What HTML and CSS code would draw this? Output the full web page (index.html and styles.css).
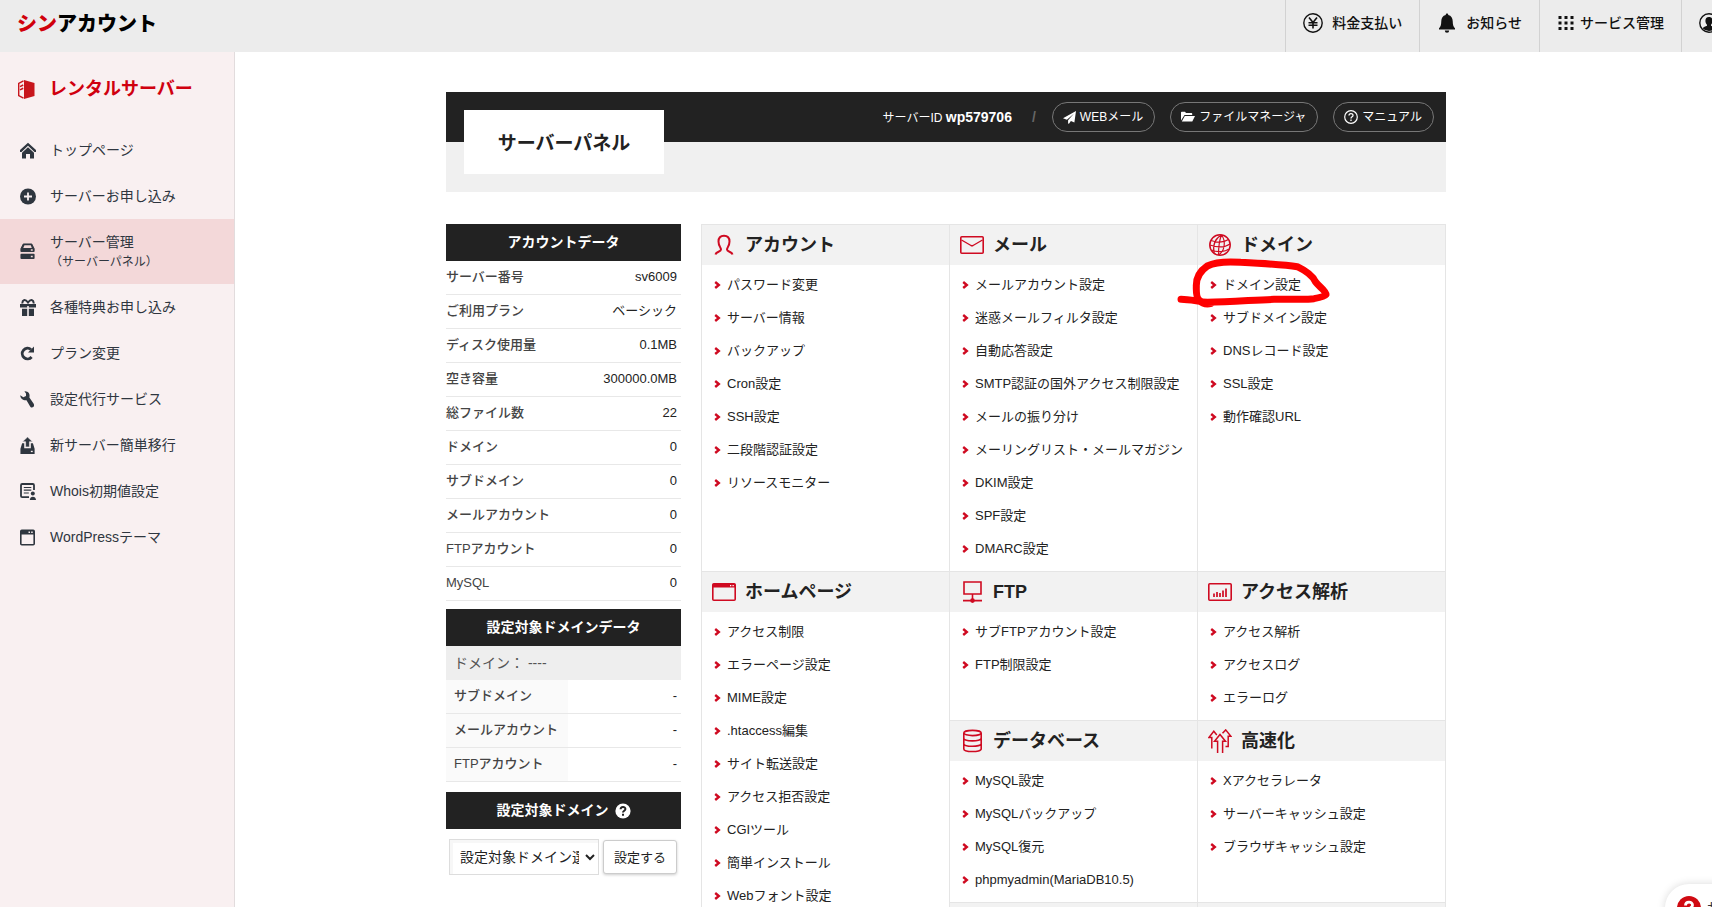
FILE: index.html
```
<!DOCTYPE html>
<html lang="ja">
<head>
<meta charset="utf-8">
<title>サーバーパネル</title>
<meta name="viewport" content="width=device-width, initial-scale=1">
<link rel="stylesheet" href="styles.css">
</head>
<body>
<svg class="defs" aria-hidden="true">
  <symbol id="chev" viewBox="0 0 7 8"><path d="M1.2 1 L4.8 4 L1.2 7" fill="none" stroke="#cf0a21" stroke-width="2.4"/></symbol>
</svg>
<header class="topbar">
  <a class="logo" href="#"><span class="logo-red">シン</span>アカウント</a>
  <nav class="topnav">
    <a href="#" class="topnav-item">
      <svg class="icon20" viewBox="0 0 20 20"><circle cx="10" cy="10" r="9.2" fill="none" stroke="#111" stroke-width="1.4"/><path d="M6 4.5 L10 9.5 L14 4.5 M10 9.5 V15.5 M5.5 9.7 H14.5 M5.5 12.3 H14.5" fill="none" stroke="#111" stroke-width="1.6"/></svg>
      <span>料金支払い</span>
    </a>
    <a href="#" class="topnav-item">
      <svg class="icon20" viewBox="0 0 20 20"><path d="M10 .5 c.9 0 1.3.7 1.3 1.4 C14.300 2.600 15.600 5 15.700 8 C15.800 12 16.300 13.600 18 15.200 V16.500 H2 V15.200 C3.700 13.600 4.200 12 4.300 8 C4.400 5 5.700 2.600 8.700 1.900 C8.700 1.200 9.100.5 10 .5Z M7.800 17.500 h4.400 a2.200 2.200 0 0 1 -4.400 0Z" fill="#111"/></svg>
      <span>お知らせ</span>
    </a>
    <a href="#" class="topnav-item topnav-apps">
      <svg class="icon16" viewBox="0 0 16 16"><path d="M.5 1h3v3h-3z M6.500 1h3v3h-3z M12.500 1h3v3h-3z M.5 6.500h3v3h-3z M6.500 6.500h3v3h-3z M12.500 6.500h3v3h-3z M.5 12h3v3h-3z M6.500 12h3v3h-3z M12.500 12h3v3h-3z" fill="#111"/></svg>
      <span>サービス管理</span>
    </a>
    <a href="#" class="topnav-item topnav-user" aria-label="アカウント">
      <svg class="icon20" viewBox="0 0 20 20"><circle cx="10" cy="10" r="9.200" fill="none" stroke="#111" stroke-width="1.400"/><path d="M10 4 c2.500 0 3.600 1.700 3.600 3.800 0 1.700-.7 3-1.600 3.900 v1 c1.500.7 3.500 1.200 4.500 2.600 A9 9 0 0 1 3.500 15.300 c1-1.400 3-1.900 4.500-2.600 v-1 c-.9-.9-1.600-2.200-1.600-3.900 C6.400 5.700 7.500 4 10 4Z" fill="#111"/></svg>
    </a>
  </nav>
</header>

<div class="shell">
  <aside class="sidebar">
    <h2 class="side-title">
      <svg class="side-logo" viewBox="0 0 17 19"><path d="M6 0 L16.500 3 V16 L6 19Z" fill="#c8161d"/><path d="M5.500 .8 L.7 3.500 V15.500 L5.500 18.200" fill="none" stroke="#c8161d" stroke-width="1.400"/><path d="M5.200 5 L2 6.600 M5.200 8.300 L2 9.900" stroke="#c8161d" stroke-width="1.600"/></svg>
      レンタルサーバー
    </h2>
    <nav class="side-nav">
      <a href="#"><svg viewBox="0 0 16 16"><path d="M0 7.600 L8 .2 L16 7.600 V9.400 L14.500 9.400 L8 3.300 L1.500 9.400 L0 9.400Z" fill="#2f363f"/><path d="M8 4.800 L14 10.300 V16 H10 V11.500 H6 V16 H2 V10.300Z" fill="#2f363f"/></svg><span>トップページ</span></a>
      <a href="#"><svg viewBox="0 0 16 16"><circle cx="8" cy="8" r="8" fill="#2f363f"/><path d="M8 4v8M4 8h8" stroke="#f9f0f1" stroke-width="1.800"/></svg><span>サーバーお申し込み</span></a>
      <a href="#" class="active"><svg viewBox="0 0 16 18"><path d="M3 1 H12 L14.500 6 V9 H.5 V6Z" fill="#2f363f" stroke="#2f363f"/><path d="M4.200 2.400 H11 L12 5.300 H3Z" fill="#f3d8d9"/><rect y="11.500" width="15" height="5.500" rx="1" fill="#2f363f"/><path d="M11 7.500h2M11 14.300h2" stroke="#f3d8d9" stroke-width="1.600"/></svg><span>サーバー管理<small>（サーバーパネル）</small></span></a>
      <a href="#"><svg viewBox="0 0 16 17"><path d="M2.500 4.500 C2 1 5 -.5 8 3.500 C11 -.5 14 1 13.500 4.500" fill="none" stroke="#2f363f" stroke-width="2"/><path d="M0 5h7.200v3.500H0z M8.800 5H16v3.500H8.800z M2 9.800h5.200V17H2z M8.800 9.800H14V17H8.800z M7.200 5h1.600v2H7.200z" fill="#2f363f"/></svg><span>各種特典お申し込み</span></a>
      <a href="#"><svg viewBox="0 0 16 16"><path d="M11.600 11.500 A5.300 5.300 0 1 1 11 4" fill="none" stroke="#2f363f" stroke-width="2.900"/><path d="M14 1 V7 H8Z" fill="#2f363f"/></svg><span>プラン変更</span></a>
      <a href="#"><svg viewBox="0 0 16 17"><path d="M4.500 .4 C8 0 10.500 3 9.400 6.500 L13.700 12.800 C14.600 14.500 14 16.500 12 16.500 C11 16.500 10.400 15.900 10 15.200 L6.500 9.200 C3.500 9.600 .3 8 .3 4.300 L3.300 6.200 L6 4.900 L6 2.400Z" fill="#2f363f"/></svg><span>設定代行サービス</span></a>
      <a href="#"><svg viewBox="0 0 16 18"><path d="M1.800 6.500 H4 V12 H11 V6.500 H13.200 L15 12.500 V18 H0 V12.500Z" fill="#2f363f"/><path d="M7.500 0 L12.800 5 H9.500 V10.500 H5.500 V5 H2.200Z" fill="#2f363f" stroke="#f9f0f1" stroke-width=".6"/><path d="M11 15.300h2" stroke="#f9f0f1" stroke-width="1.400"/></svg><span>新サーバー簡単移行</span></a>
      <a href="#"><svg viewBox="0 0 16 17"><path d="M9 14.200 H2.200 Q1 14.200 1 13 V2.200 Q1 1 2.200 1 H12.800 Q14 1 14 2.200 V7" fill="none" stroke="#2f363f" stroke-width="1.800"/><path d="M3.800 4.500h7.500M3.800 7.200h7.500M3.800 10h5" stroke="#2f363f" stroke-width="1.200"/><circle cx="12.800" cy="10.500" r="2" fill="#2f363f"/><path d="M9.800 17 C9.800 12.500 16 12.500 16 17Z" fill="#2f363f"/></svg><span>Whois初期値設定</span></a>
      <a href="#"><svg viewBox="0 0 16 16"><rect x=".8" y=".8" width="13.400" height="14.400" rx="1" fill="none" stroke="#2f363f" stroke-width="1.600"/><path d="M1 1h13v4H1z" fill="#2f363f"/><path d="M8.500 2.700h1.500M11.200 2.700h1.500" stroke="#f9f0f1" stroke-width="1.400"/></svg><span>WordPressテーマ</span></a>
    </nav>
  </aside>

  <main class="main">
    <div class="content">
      <div class="panel-head">
        <h1 class="panel-title">サーバーパネル</h1>
        <div class="panel-tools">
          <span class="server-id">サーバーID <b>wp579706</b></span>
          <span class="slash">/</span>
          <a href="#" class="pill"><svg viewBox="0 0 12 12"><path d="M12 0 L10.500 10.500 L7.300 9.200 L5.500 11.800 L4.700 11.500 V8.500 L10 2.500 L3.600 8 L0 6.600Z" fill="#fff"/></svg>WEBメール</a>
          <a href="#" class="pill"><svg class="wide" viewBox="0 0 14 12"><path d="M0 9.500 V1.500 Q0 .8.8.8 H4 L5 2 H10.500 Q11.200 2 11.200 2.700 V4 H3.500Z M3.800 5 H14 L11.300 10.500 H.8Z" fill="#fff"/></svg>ファイルマネージャ</a>
          <a href="#" class="pill"><svg class="wide" viewBox="0 0 14 14"><circle cx="7" cy="7" r="6.300" fill="none" stroke="#fff" stroke-width="1.200"/><path d="M5 5.600 C5 3 9 3 9 5.400 C9 6.800 7 6.800 7 8.500 M7 9.500 V11" fill="none" stroke="#fff" stroke-width="1.300"/></svg>マニュアル</a>
        </div>
      </div>

      <div class="columns">
        <div class="stats">
          <h2 class="bar">アカウントデータ</h2>
          <table class="data">
            <tr><th scope="row">サーバー番号</th><td>sv6009</td></tr>
            <tr><th scope="row">ご利用プラン</th><td>ベーシック</td></tr>
            <tr><th scope="row">ディスク使用量</th><td>0.1MB</td></tr>
            <tr><th scope="row">空き容量</th><td>300000.0MB</td></tr>
            <tr><th scope="row">総ファイル数</th><td>22</td></tr>
            <tr><th scope="row">ドメイン</th><td>0</td></tr>
            <tr><th scope="row">サブドメイン</th><td>0</td></tr>
            <tr><th scope="row">メールアカウント</th><td>0</td></tr>
            <tr><th scope="row">FTPアカウント</th><td>0</td></tr>
            <tr><th scope="row">MySQL</th><td>0</td></tr>
          </table>
          <h2 class="bar">設定対象ドメインデータ</h2>
          <p class="domain-line">ドメイン： ----</p>
          <table class="data data-domain">
            <tr><th scope="row">サブドメイン</th><td>-</td></tr>
            <tr><th scope="row">メールアカウント</th><td>-</td></tr>
            <tr><th scope="row">FTPアカウント</th><td>-</td></tr>
          </table>
          <h2 class="bar">設定対象ドメイン <svg class="help" viewBox="0 0 16 16"><circle cx="8" cy="8" r="7.600" fill="#fff"/><path d="M5.600 6.300 C5.600 3.200 10.400 3.200 10.400 6 C10.400 7.700 8 7.700 8 9.600 M8 10.800 V12.800" fill="none" stroke="#222" stroke-width="2"/></svg></h2>
          <form class="domain-form">
            <select aria-label="設定対象ドメイン"><option>設定対象ドメイン選択</option></select>
            <button type="button">設定する</button>
          </form>
        </div>

        <div class="menu-grid">
          <section class="menu">
            <h3><svg viewBox="0 0 24 24"><path d="M3.500 21.500 C4 18.500 9 19 9 16.500 C9 14.500 6.500 13 6.500 8.500 C6.500 4.500 9 2.700 12 2.700 C15 2.700 17.500 4.500 17.500 8.500 C17.500 13 15 14.500 15 16.500 C15 19 20 18.500 20.500 21.500" fill="none" stroke="#cf0a21" stroke-width="2"/></svg>アカウント</h3>
            <ul>
              <li><a href="#"><svg><use href="#chev"/></svg>パスワード変更</a></li>
              <li><a href="#"><svg><use href="#chev"/></svg>サーバー情報</a></li>
              <li><a href="#"><svg><use href="#chev"/></svg>バックアップ</a></li>
              <li><a href="#"><svg><use href="#chev"/></svg>Cron設定</a></li>
              <li><a href="#"><svg><use href="#chev"/></svg>SSH設定</a></li>
              <li><a href="#"><svg><use href="#chev"/></svg>二段階認証設定</a></li>
              <li><a href="#"><svg><use href="#chev"/></svg>リソースモニター</a></li>
            </ul>
          </section>
          <section class="menu">
            <h3><svg viewBox="0 0 24 24"><rect x=".8" y="3.800" width="22.400" height="16.400" rx="1" fill="none" stroke="#cf0a21" stroke-width="1.600"/><path d="M1.500 7 L11 12.500 Q12 13 13 12.500 L22.500 7" fill="none" stroke="#cf0a21" stroke-width="1.400"/></svg>メール</h3>
            <ul>
              <li><a href="#"><svg><use href="#chev"/></svg>メールアカウント設定</a></li>
              <li><a href="#"><svg><use href="#chev"/></svg>迷惑メールフィルタ設定</a></li>
              <li><a href="#"><svg><use href="#chev"/></svg>自動応答設定</a></li>
              <li><a href="#"><svg><use href="#chev"/></svg>SMTP認証の国外アクセス制限設定</a></li>
              <li><a href="#"><svg><use href="#chev"/></svg>メールの振り分け</a></li>
              <li><a href="#"><svg><use href="#chev"/></svg>メーリングリスト・メールマガジン</a></li>
              <li><a href="#"><svg><use href="#chev"/></svg>DKIM設定</a></li>
              <li><a href="#"><svg><use href="#chev"/></svg>SPF設定</a></li>
              <li><a href="#"><svg><use href="#chev"/></svg>DMARC設定</a></li>
            </ul>
          </section>
          <section class="menu menu-marked">
            <h3><svg viewBox="0 0 24 24"><g fill="none" stroke="#cf0a21" stroke-width="1.200"><circle cx="12" cy="12" r="10.200" stroke-width="1.500"/><path d="M13.500 2 C11 8 10.500 16 10.500 22 M13.500 2 C6 6 5 14 6 20 M13.500 2 C18 8 17 18 10.500 22 M3 7.500 C9 9.500 16 9.500 20.500 6.500 M2 12 C9 14.500 17 14.500 22 11 M3.500 17 C9 19.500 17 19 21 16"/></g></svg>ドメイン</h3>
            <ul>
              <li><a href="#"><svg><use href="#chev"/></svg>ドメイン設定</a></li>
              <li><a href="#"><svg><use href="#chev"/></svg>サブドメイン設定</a></li>
              <li><a href="#"><svg><use href="#chev"/></svg>DNSレコード設定</a></li>
              <li><a href="#"><svg><use href="#chev"/></svg>SSL設定</a></li>
              <li><a href="#"><svg><use href="#chev"/></svg>動作確認URL</a></li>
            </ul>
            <svg class="marker" viewBox="700 105 480 165"><path d="M721 238 C745 238 770 244 800 247 C870 246 940 240 1000 238 C1050 236 1090 240 1120 236 Q1152 230 1156 224 C1156 212 1135 200 1124 185 C1115 165 1095 152 1070 140 C1030 134 960 130 900 127 C860 124 820 128 800 138 C775 155 766 178 767 200 Q766 232 775 240 Q790 256 812 250" fill="none" stroke="#fe0000" stroke-width="21" stroke-linecap="round" stroke-linejoin="round"/></svg>
          </section>

          <section class="menu menu-tall">
            <h3><svg viewBox="0 0 24 24"><rect x=".8" y="3.800" width="22.400" height="16.400" rx="1" fill="none" stroke="#cf0a21" stroke-width="1.600"/><path d="M1 4h22v3.500H1z" fill="#cf0a21"/><path d="M18 5.700h1.300M20.500 5.700h1.300" stroke="#fff" stroke-width="1.200"/></svg>ホームページ</h3>
            <ul>
              <li><a href="#"><svg><use href="#chev"/></svg>アクセス制限</a></li>
              <li><a href="#"><svg><use href="#chev"/></svg>エラーページ設定</a></li>
              <li><a href="#"><svg><use href="#chev"/></svg>MIME設定</a></li>
              <li><a href="#"><svg><use href="#chev"/></svg>.htaccess編集</a></li>
              <li><a href="#"><svg><use href="#chev"/></svg>サイト転送設定</a></li>
              <li><a href="#"><svg><use href="#chev"/></svg>アクセス拒否設定</a></li>
              <li><a href="#"><svg><use href="#chev"/></svg>CGIツール</a></li>
              <li><a href="#"><svg><use href="#chev"/></svg>簡単インストール</a></li>
              <li><a href="#"><svg><use href="#chev"/></svg>Webフォント設定</a></li>
            </ul>
          </section>
          <section class="menu">
            <h3><svg viewBox="0 0 24 24"><path d="M4 2h17v12H4z M12.500 14 V19 M3 20.600 H22" fill="none" stroke="#cf0a21" stroke-width="1.600"/><circle cx="12.500" cy="20.600" r="2.300" fill="#cf0a21"/></svg>FTP</h3>
            <ul>
              <li><a href="#"><svg><use href="#chev"/></svg>サブFTPアカウント設定</a></li>
              <li><a href="#"><svg><use href="#chev"/></svg>FTP制限設定</a></li>
            </ul>
          </section>
          <section class="menu">
            <h3><svg viewBox="0 0 24 24"><rect x=".8" y="3.800" width="22.400" height="16.400" rx="1" fill="none" stroke="#cf0a21" stroke-width="1.600"/><path d="M6 17v-3.500M9 17v-5M12 17v-4M15 17v-6.500M18 17V8.500" stroke="#cf0a21" stroke-width="1.700"/></svg>アクセス解析</h3>
            <ul>
              <li><a href="#"><svg><use href="#chev"/></svg>アクセス解析</a></li>
              <li><a href="#"><svg><use href="#chev"/></svg>アクセスログ</a></li>
              <li><a href="#"><svg><use href="#chev"/></svg>エラーログ</a></li>
            </ul>
          </section>
          <section class="menu">
            <h3><svg viewBox="0 0 24 24"><g fill="none" stroke="#cf0a21" stroke-width="1.600"><ellipse cx="12.500" cy="4" rx="8.700" ry="2.600"/><path d="M3.800 4 V20 C3.800 23.400 21.200 23.400 21.200 20 V4 M3.800 9.300 C3.800 12.700 21.200 12.700 21.200 9.300 M3.800 14.700 C3.800 18.100 21.200 18.100 21.200 14.700"/></g></svg>データベース</h3>
            <ul>
              <li><a href="#"><svg><use href="#chev"/></svg>MySQL設定</a></li>
              <li><a href="#"><svg><use href="#chev"/></svg>MySQLバックアップ</a></li>
              <li><a href="#"><svg><use href="#chev"/></svg>MySQL復元</a></li>
              <li><a href="#"><svg><use href="#chev"/></svg>phpmyadmin(MariaDB10.5)</a></li>
            </ul>
          </section>
          <section class="menu">
            <h3><svg viewBox="0 0 24 24"><g fill="none" stroke="#cf0a21" stroke-width="1.500"><path d="M3.800 19.500 V8.500 H.9 L5.800 2.300 L8.800 6"/><path d="M14.500 4.300 L17.700 .9 L22.900 7.300 H20.200 V17.500 H17.500"/><path d="M9.600 24 V12.300 H6.500 L12 5.500 L17.500 12.300 H14.600 V24"/></g></svg>高速化</h3>
            <ul>
              <li><a href="#"><svg><use href="#chev"/></svg>Xアクセラレータ</a></li>
              <li><a href="#"><svg><use href="#chev"/></svg>サーバーキャッシュ設定</a></li>
              <li><a href="#"><svg><use href="#chev"/></svg>ブラウザキャッシュ設定</a></li>
            </ul>
          </section>
          <section class="menu"><h3></h3></section>
          <section class="menu"><h3></h3></section>
        </div>
      </div>
    </div>
  </main>
</div>

<a href="#" class="support"><svg viewBox="0 0 24 24"><circle cx="12" cy="12" r="12" fill="#d00a12"/><path d="M8.500 9.500 C8.500 5 15.500 5 15.500 9 C15.500 12 12 11.500 12 14.500 M12 16.500 V19" fill="none" stroke="#fff" stroke-width="2.800"/></svg>サポート</a>
</body>
</html>
```

FILE: styles.css
```
* { box-sizing: border-box; }

html, body { height: 100%; }

body {
  margin: 0;
  display: flex;
  flex-direction: column;
  overflow: hidden;
  position: relative;
  background: #fff;
  color: #222;
  font-family: "Liberation Sans", "Noto Sans CJK JP", sans-serif;
  font-size: 13px;
  line-height: 20px;
}

a { color: inherit; text-decoration: none; }
h1, h2, h3, p, ul { margin: 0; padding: 0; }
ul { list-style: none; }
svg { display: block; flex: none; }
.defs { position: absolute; width: 0; height: 0; }

/* top bar */
.topbar {
  flex: none;
  display: flex;
  justify-content: space-between;
  height: 52px;
  background: #ececec;
  overflow: hidden;
}
.logo {
  padding: 9px 0 0 17px;
  font-size: 20px;
  line-height: 30px;
  font-weight: 900;
  color: #000;
}
.logo-red { color: #d0000b; }
.topnav { display: flex; color: #111; font-size: 14px; font-weight: 500; }
.topnav-item {
  display: flex;
  align-items: center;
  gap: 9px;
  padding: 0 17px 6px;
  border-left: 1px solid #d2d2d2;
}
.topnav-apps { gap: 6px; padding-left: 18px; }
.topnav-user { width: 31px; padding-right: 0; overflow: hidden; }
.icon20 { width: 20px; height: 20px; }
.icon16 { width: 16px; height: 16px; }

/* sidebar */
.shell { flex: 1; display: flex; min-height: 0; }
.sidebar {
  flex: none;
  width: 235px;
  background: #f9f0f1;
  border-right: 1px solid #e2dcdd;
}
.side-title {
  display: flex;
  align-items: center;
  gap: 14px;
  padding: 22px 18px 23px;
  font-size: 18px;
  line-height: 30px;
  color: #d0000f;
}
.side-logo { width: 17px; height: 19px; }
.side-nav a {
  display: flex;
  align-items: center;
  gap: 14px;
  min-height: 46px;
  padding: 0 20px;
  font-size: 14px;
  color: #2f363f;
}
.side-nav svg { width: 16px; height: 17px; }
.side-nav small { display: block; font-size: 12px; }
.side-nav .active { min-height: 65px; background: #f3d8d9; }

/* main area */
.main { flex: 1; min-width: 0; overflow: hidden; padding: 40px 55px 0 0; }
.content { max-width: 1000px; margin: 0 auto; }
.panel-head {
  display: flex;
  justify-content: space-between;
  align-items: flex-start;
  padding: 0 12px 18px 18px;
  background: linear-gradient(#222 50px, #f0f0f0 50px);
}
.panel-title {
  margin-top: 18px;
  padding: 4px 0 0;
  width: 200px;
  background: #fff;
  text-align: center;
  font-size: 19px;
  line-height: 60px;
}
.panel-tools {
  display: flex;
  align-items: center;
  height: 50px;
  font-size: 12px;
  color: #fff;
}
.server-id b { font-size: 14px; }
.slash { margin: 0 16px 0 20px; font-size: 14px; font-weight: 700; color: #666; }
.pill {
  display: flex;
  align-items: center;
  gap: 4px;
  height: 30px;
  padding: 0 11px 0 10px;
  border: 1px solid #777;
  border-radius: 15px;
}
.pill + .pill { margin-left: 15px; }
.pill svg { width: 13px; height: 13px; }
.pill .wide { width: 14px; height: 14px; }

.columns {
  display: grid;
  grid-template-columns: 235px 1fr;
  gap: 20px;
  align-items: start;
  margin-top: 32px;
}

/* account data */
.bar {
  display: flex;
  justify-content: center;
  align-items: center;
  gap: 6px;
  background: #222;
  color: #fff;
  font-size: 14px;
  line-height: 37px;
}
.help { width: 16px; height: 16px; }
.data {
  width: 100%;
  margin-bottom: 8px;
  border-collapse: collapse;
}
.data tr { border-bottom: 1px solid #e8e8e8; }
.data th, .data td { padding: 6px 4px 7px 0; }
.data th { text-align: left; font-weight: 500; color: #444; }
.data td { text-align: right; }
.data-domain { margin-bottom: 10px; }
.data-domain th { width: 122px; padding-left: 8px; background: #fafafa; }
.domain-line {
  padding: 7px 8px;
  background: #eee;
  color: #555;
  font-size: 14px;
}
.domain-form {
  display: flex;
  align-items: center;
  gap: 4px;
  padding: 10px 4px 0 3px;
}
.domain-form select {
  flex: 1;
  min-width: 0;
  height: 36px;
  padding: 0 3px 0 6px;
  border: 1px solid #ddd;
  background: #fff;
  box-shadow: inset 3px 3px 0 #f7f7f7;
  color: #222;
  font: 14px "Liberation Sans", "Noto Sans CJK JP", sans-serif;
}
.domain-form button {
  width: 74px;
  height: 34px;
  padding: 0 0 2px;
  border: 1px solid #ccc;
  border-radius: 3px;
  background: #fff;
  box-shadow: 0 1px 3px rgba(0, 0, 0, 0.2);
  color: #222;
  font: 13px "Liberation Sans", "Noto Sans CJK JP", sans-serif;
}

/* menu grid */
.menu-grid {
  display: grid;
  grid-template-columns: repeat(3, 1fr);
  border-right: 1px solid #e5e5e5;
}
.menu {
  min-width: 0;
  border-left: 1px solid #e5e5e5;
  border-top: 1px solid #e5e5e5;
}
.menu-tall { grid-row: span 3; }
.menu h3 {
  display: flex;
  align-items: center;
  gap: 9px;
  height: 40px;
  padding: 0 10px;
  background: #f2f2f2;
  font-size: 18px;
}
.menu h3 svg { width: 24px; height: 24px; }
.menu ul { padding: 3px 0 6px; }
.menu li a {
  display: flex;
  align-items: center;
  gap: 6px;
  height: 33px;
  padding-left: 12px;
  white-space: nowrap;
}
.menu li svg { width: 7px; height: 8px; }

/* hand-drawn highlight round the first domain link */
.menu-marked { position: relative; }
.marker {
  position: absolute;
  left: -24px;
  top: 30px;
  width: 160px;
  height: 55px;
  pointer-events: none;
}

/* floating support button */
.support {
  position: absolute;
  right: -60px;
  bottom: -25px;
  display: flex;
  align-items: center;
  gap: 6px;
  width: 107px;
  height: 48px;
  padding-left: 12px;
  border-radius: 24px;
  background: #fff;
  box-shadow: 0 0 8px rgba(0, 0, 0, 0.15);
  color: #2f363f;
  font-size: 14px;
  white-space: nowrap;
  overflow: hidden;
}
.support svg { width: 24px; height: 24px; }
```
